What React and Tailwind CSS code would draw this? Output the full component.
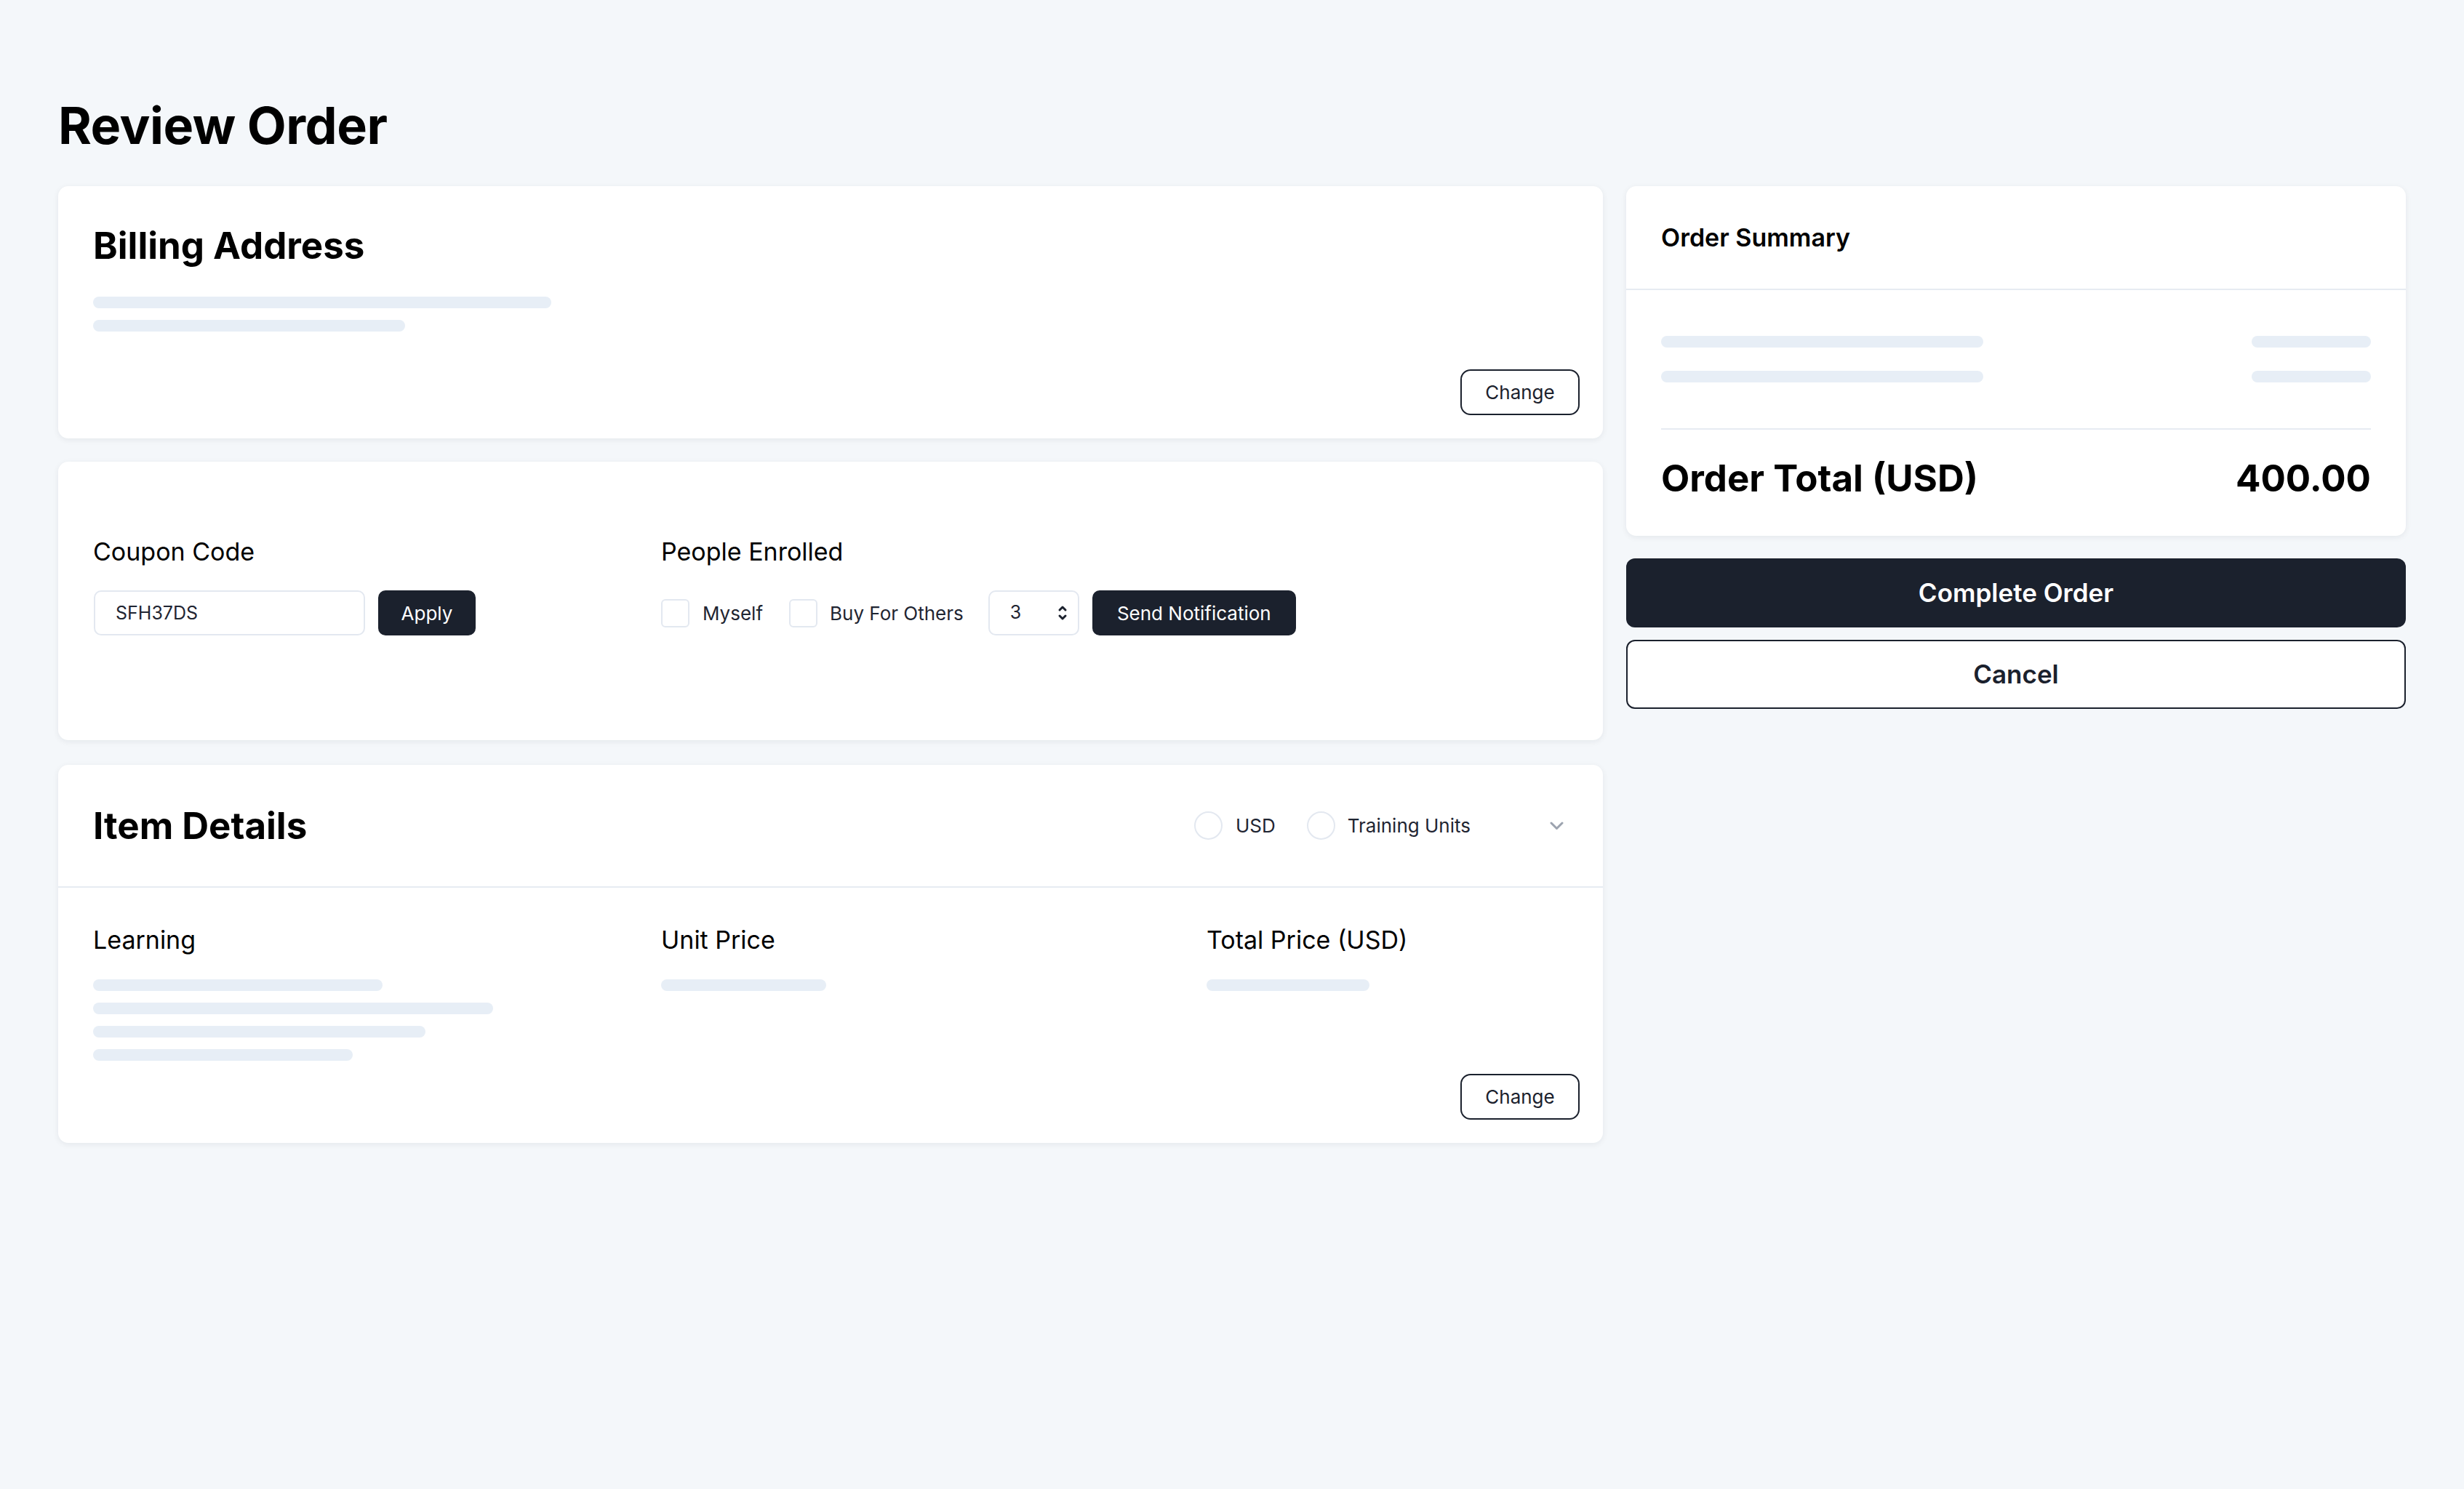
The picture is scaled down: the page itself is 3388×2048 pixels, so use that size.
import React, { useState } from 'react';

const font = { fontFamily: 'Inter, "Noto Sans", sans-serif' };

function Skel({ w }) {
  return <div className={`h-[16px] rounded-full bg-[#e7eef6] ${w}`} />;
}

function OutlineBtn({ children }) {
  return (
    <button className="h-[63px] w-[164px] rounded-[14px] border-2 border-[#1b212d] bg-white text-[26px] text-[#1b212d]">
      {children}
    </button>
  );
}

function Box() {
  return <span className="block h-[39px] w-[39px] shrink-0 rounded-[6px] border-2 border-[#e3e8f0] bg-white" />;
}

function Radio() {
  return <span className="block h-[39px] w-[39px] shrink-0 rounded-full border-2 border-[#e3e8f0] bg-white" />;
}

export default function App() {
  const [coupon, setCoupon] = useState('SFH37DS');
  const [qty] = useState(3);

  return (
    <div style={font} className="min-h-screen bg-[#f4f7fa] px-[80px] pt-[138px] pb-[80px] text-black">
      <h1 className="mb-[48px] text-[70px] font-bold leading-none tracking-[-0.5px]">Review Order</h1>

      <div className="flex items-start gap-[32px]">
        {/* left column */}
        <div className="flex w-[2124px] shrink-0 flex-col">
          {/* billing */}
          <section className="flex h-[347px] flex-col rounded-[14px] bg-white pt-[56px] pr-[32px] pb-[32px] pl-[48px] shadow-[0_2px_8px_rgba(15,23,42,0.07)]">
            <h2 className="text-[51px] font-bold leading-none">Billing Address</h2>
            <div className="mt-[45px] flex flex-col gap-[16px]">
              <Skel w="w-[630px]" />
              <Skel w="w-[429px]" />
            </div>
            <div className="mt-auto flex justify-end">
              <OutlineBtn>Change</OutlineBtn>
            </div>
          </section>

          {/* coupon + people */}
          <section className="mt-[32px] flex h-[383px] rounded-[14px] bg-white pt-[107px] pl-[48px] shadow-[0_2px_8px_rgba(15,23,42,0.07)]">
            <div className="w-[781px]">
              <div className="mb-[36px] text-[34px] leading-none">Coupon Code</div>
              <div className="flex gap-[18px]">
                <input
                  value={coupon}
                  onChange={(e) => setCoupon(e.target.value)}
                  className="ml-[1px] h-[62px] w-[373px] rounded-[10px] border-2 border-[#e3e8f0] px-[28px] text-[25px] text-[#1f2532] outline-none"
                />
                <button className="h-[62px] w-[134px] rounded-[10px] bg-[#1b212d] text-[26px] text-white">Apply</button>
              </div>
            </div>
            <div>
              <div className="mb-[36px] text-[34px] leading-none">People Enrolled</div>
              <div className="flex h-[62px] items-center">
                <Box />
                <span className="ml-[18px] text-[26px] text-[#1f2532]">Myself</span>
                <span className="ml-[36px]"><Box /></span>
                <span className="ml-[17px] text-[26px] text-[#1f2532]">Buy For Others</span>
                <div className="ml-[34px] flex h-[62px] w-[125px] items-center justify-between rounded-[10px] border-2 border-[#e3e8f0] pr-[14px] pl-[28px] text-[25px] text-[#1f2532]">
                  <span>{qty}</span>
                  <svg width="14" height="24" viewBox="0 0 14 24" fill="none" stroke="#1b212d" strokeWidth="3" strokeLinecap="round" strokeLinejoin="round">
                    <path d="M3 8l4-4 4 4" />
                    <path d="M3 16l4 4 4-4" />
                  </svg>
                </div>
                <button className="ml-[18px] h-[62px] w-[280px] rounded-[10px] bg-[#1b212d] text-[26px] text-white">Send Notification</button>
              </div>
            </div>
          </section>

          {/* item details */}
          <section className="mt-[34px] rounded-[14px] bg-white shadow-[0_2px_8px_rgba(15,23,42,0.07)]">
            <div className="flex h-[169px] items-center border-b-2 border-[#e6ebf2] pl-[48px] pr-[54px]">
              <h2 className="text-[51px] font-bold leading-none">Item Details</h2>
              <div className="ml-auto flex items-center text-[26px] text-[#1f2532]">
                <Radio />
                <span className="ml-[18px]">USD</span>
                <span className="ml-[43px]"><Radio /></span>
                <span className="ml-[17px]">Training Units</span>
                <svg className="ml-[109px]" width="19" height="12" viewBox="0 0 19 12" fill="none" stroke="#9ca3af" strokeWidth="3" strokeLinecap="round" strokeLinejoin="round">
                  <path d="M2 2l7.5 7.5L17 2" />
                </svg>
              </div>
            </div>
            <div className="flex h-[351px] flex-col pt-[55px] pr-[32px] pb-[32px] pl-[48px]">
              <div className="flex">
                <div className="w-[781px]">
                  <div className="mb-[37px] text-[34px] leading-none">Learning</div>
                  <div className="flex flex-col gap-[16px]">
                    <Skel w="w-[398px]" />
                    <Skel w="w-[550px]" />
                    <Skel w="w-[457px]" />
                    <Skel w="w-[357px]" />
                  </div>
                </div>
                <div className="w-[750px]">
                  <div className="mb-[37px] text-[34px] leading-none">Unit Price</div>
                  <Skel w="w-[227px]" />
                </div>
                <div>
                  <div className="mb-[37px] text-[34px] leading-none">Total Price (USD)</div>
                  <Skel w="w-[224px]" />
                </div>
              </div>
              <div className="mt-auto flex justify-end">
                <OutlineBtn>Change</OutlineBtn>
              </div>
            </div>
          </section>
        </div>

        {/* right column */}
        <div className="flex flex-1 flex-col">
          <section className="rounded-[14px] bg-white shadow-[0_2px_8px_rgba(15,23,42,0.07)]">
            <div className="flex h-[143px] items-center border-b-2 border-[#e6ebf2] px-[48px]">
              <h3 className="text-[34px] font-semibold leading-none">Order Summary</h3>
            </div>
            <div className="px-[48px] pt-[63px]">
              <div className="flex flex-col gap-[32px] border-b-2 border-[#e6ebf2] pb-[63px]">
                <div className="flex justify-between">
                  <Skel w="w-[443px]" />
                  <Skel w="w-[164px]" />
                </div>
                <div className="flex justify-between">
                  <Skel w="w-[443px]" />
                  <Skel w="w-[164px]" />
                </div>
              </div>
              <div className="flex items-center justify-between pt-[41px] pb-[54px] text-[51px] font-bold leading-none">
                <span>Order Total (USD)</span>
                <span>400.00</span>
              </div>
            </div>
          </section>

          <button className="mt-[31px] h-[95px] w-full rounded-[12px] bg-[#1b212d] text-[35px] font-semibold text-white">
            Complete Order
          </button>
          <button className="mt-[17px] h-[95px] w-full rounded-[12px] border-2 border-[#1b212d] bg-white text-[35px] font-semibold text-[#1b212d]">
            Cancel
          </button>
        </div>
      </div>
    </div>
  );
}
